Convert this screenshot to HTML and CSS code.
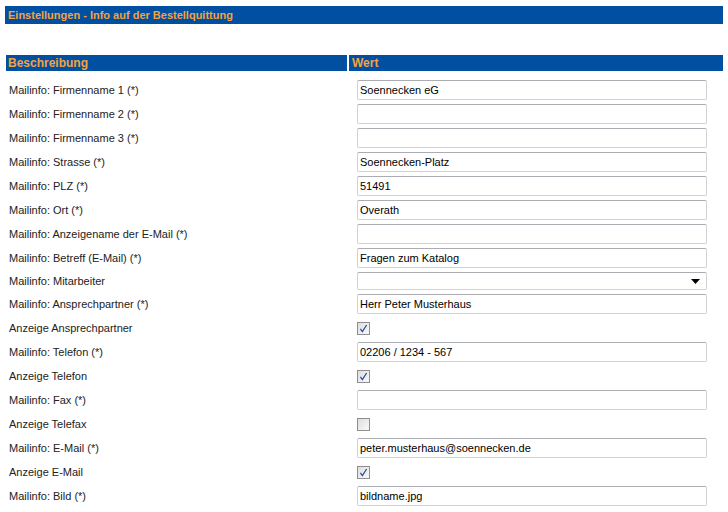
FILE: index.html
```html
<!DOCTYPE html>
<html lang="de">
<head>
  <meta charset="UTF-8">
  <title>Einstellungen - Info auf der Bestellquittung</title>
  <link rel="stylesheet" href="styles.css">
</head>
<body>

  <div class="page-title">Einstellungen - Info auf der Bestellquittung</div>

  <div class="settings">
    <div class="head">Beschreibung</div>
    <div class="head">Wert</div>

    <div class="label">Mailinfo: Firmenname 1 (*)</div>
    <div class="value"><input class="text" type="text" value="Soennecken eG"></div>

    <div class="label">Mailinfo: Firmenname 2 (*)</div>
    <div class="value"><input class="text" type="text" value=""></div>

    <div class="label">Mailinfo: Firmenname 3 (*)</div>
    <div class="value"><input class="text" type="text" value=""></div>

    <div class="label">Mailinfo: Strasse (*)</div>
    <div class="value"><input class="text" type="text" value="Soennecken-Platz"></div>

    <div class="label">Mailinfo: PLZ (*)</div>
    <div class="value"><input class="text" type="text" value="51491"></div>

    <div class="label">Mailinfo: Ort (*)</div>
    <div class="value"><input class="text" type="text" value="Overath"></div>

    <div class="label">Mailinfo: Anzeigename der E-Mail (*)</div>
    <div class="value"><input class="text" type="text" value=""></div>

    <div class="label">Mailinfo: Betreff (E-Mail) (*)</div>
    <div class="value"><input class="text" type="text" value="Fragen zum Katalog"></div>

    <div class="label short">Mailinfo: Mitarbeiter</div>
    <div class="value short">
      <div class="select">
        <svg width="9" height="5" viewBox="0 0 9 5"><path d="M0 0h9L4.5 5z" fill="#000"/></svg>
      </div>
    </div>

    <div class="label">Mailinfo: Ansprechpartner (*)</div>
    <div class="value"><input class="text" type="text" value="Herr Peter Musterhaus"></div>

    <div class="label">Anzeige Ansprechpartner</div>
    <div class="value">
      <svg class="check" width="13" height="13" viewBox="0 0 13 13">
        <rect x="0.5" y="0.5" width="12" height="12" fill="url(#box)" stroke="#8e8f8f"/>
        <path d="M3.4 6.9L5.4 9.6L9.6 3" fill="none" stroke="#2f4ea3" stroke-width="1.3"/>
      </svg>
    </div>

    <div class="label">Mailinfo: Telefon (*)</div>
    <div class="value"><input class="text" type="text" value="02206 / 1234 - 567"></div>

    <div class="label">Anzeige Telefon</div>
    <div class="value">
      <svg class="check" width="13" height="13" viewBox="0 0 13 13">
        <rect x="0.5" y="0.5" width="12" height="12" fill="url(#box)" stroke="#8e8f8f"/>
        <path d="M3.4 6.9L5.4 9.6L9.6 3" fill="none" stroke="#2f4ea3" stroke-width="1.3"/>
      </svg>
    </div>

    <div class="label">Mailinfo: Fax (*)</div>
    <div class="value"><input class="text" type="text" value=""></div>

    <div class="label">Anzeige Telefax</div>
    <div class="value">
      <svg class="check" width="13" height="13" viewBox="0 0 13 13">
        <rect x="0.5" y="0.5" width="12" height="12" fill="url(#box)" stroke="#8e8f8f"/>
      </svg>
    </div>

    <div class="label">Mailinfo: E-Mail (*)</div>
    <div class="value"><input class="text" type="text" value="peter.musterhaus@soennecken.de"></div>

    <div class="label">Anzeige E-Mail</div>
    <div class="value">
      <svg class="check" width="13" height="13" viewBox="0 0 13 13">
        <rect x="0.5" y="0.5" width="12" height="12" fill="url(#box)" stroke="#8e8f8f"/>
        <path d="M3.4 6.9L5.4 9.6L9.6 3" fill="none" stroke="#2f4ea3" stroke-width="1.3"/>
      </svg>
    </div>

    <div class="label">Mailinfo: Bild (*)</div>
    <div class="value"><input class="text" type="text" value="bildname.jpg"></div>
  </div>

  <svg width="0" height="0" class="defs">
    <defs>
      <linearGradient id="box" x1="0" y1="0" x2="1" y2="1">
        <stop offset="0" stop-color="#dcdcdc"/>
        <stop offset="1" stop-color="#fbfbfb"/>
      </linearGradient>
    </defs>
  </svg>

</body>
</html>
```

FILE: styles.css
```css
* {
  box-sizing: border-box;
  margin: 0;
  padding: 0;
}
body {
  background: #fff;
  font-family: "Liberation Sans", Arial, sans-serif;
  font-size: 11px;
  color: #222;
  padding: 6px 5px 0 5px;
}
.page-title {
  height: 18px;
  line-height: 18px;
  background: #004fa0;
  color: #f6a23c;
  font-size: 11px;
  font-weight: bold;
  padding-left: 3px;
}
.settings {
  display: grid;
  grid-template-columns: 341px 1fr;
  column-gap: 2px;
  margin: 31px 0 0 1px;
}
.head {
  height: 16px;
  line-height: 16px;
  background: #004fa0;
  color: #f6a23c;
  font-size: 12px;
  font-weight: bold;
  padding-left: 2px;
  margin-bottom: 7px;
}
.head + .head {
  padding-left: 3px;
}
.label {
  height: 24px;
  display: flex;
  align-items: center;
  padding-left: 3px;
}
.value {
  height: 24px;
  display: flex;
  align-items: center;
  padding-left: 8px;
}
.short {
  height: 22px;
}
.text {
  width: 350px;
  height: 20px;
  border: 1px solid #d2d3d5;
  border-top-color: #abadb3;
  border-radius: 2px;
  padding: 0 2px;
  font-family: "Liberation Sans", Arial, sans-serif;
  font-size: 11px;
  color: #000;
  background: #fff;
  outline: none;
}
.select {
  width: 350px;
  height: 18px;
  border: 1px solid #d2d3d5;
  border-top-color: #abadb3;
  border-radius: 2px;
  display: flex;
  align-items: center;
  justify-content: flex-end;
  padding-right: 6px;
}
.check {
  display: block;
}
.defs {
  position: absolute;
}
```
